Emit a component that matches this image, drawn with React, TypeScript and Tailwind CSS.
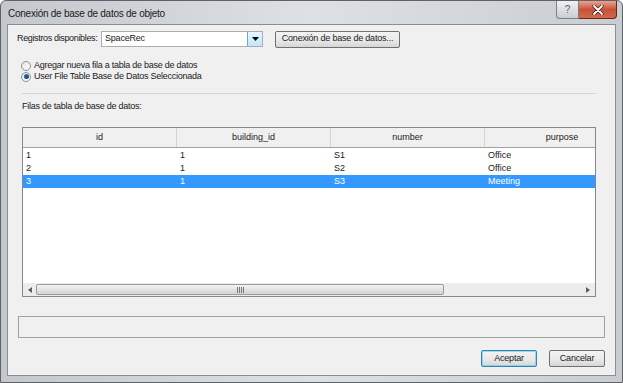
import React from "react";

const font = { fontFamily: '"Liberation Sans", Arial, sans-serif' };

type Row = { id: string; building: string; number: string; purpose: string };

const rows: Row[] = [
  { id: "1", building: "1", number: "S1", purpose: "Office" },
  { id: "2", building: "1", number: "S2", purpose: "Office" },
  { id: "3", building: "1", number: "S3", purpose: "Meeting" },
];

const columns = ["id", "building_id", "number", "purpose"];

const Radio: React.FC<{ checked?: boolean; label: string }> = ({ checked, label }) => (
  <label className="flex items-center gap-[3px] h-[11px]">
    <span className="w-[10px] h-[10px] rounded-full border border-[#8f8f8f] bg-gradient-to-br from-[#e4e4e4] to-[#ffffff] flex items-center justify-center">
      {checked && <span className="w-[5px] h-[5px] rounded-full bg-gradient-to-br from-[#2f6fb0] to-[#1b3f70]" />}
    </span>
    <span className="text-[9px] text-[#1a1a1a] tracking-[-0.25px]">{label}</span>
  </label>
);

const WinButton: React.FC<{ label: string; width: string; focused?: boolean }> = ({ label, width, focused }) => (
  <button
    type="button"
    className={`${width} h-[17px] rounded-[2px] border ${focused ? "border-[#3c7fb1] ring-1 ring-inset ring-[#48d4f8]/60" : "border-[#707070]"} bg-gradient-to-b from-[#f2f2f2] via-[#ebebeb] to-[#d6d6d6] text-[9px] text-[#1a1a1a] flex items-center justify-center tracking-[-0.2px]`}
  >
    {label}
  </button>
);

export default function App() {
  return (
    <div className="w-[623px] h-[383px] bg-white" style={font}>
      <div className="w-[623px] h-[383px] rounded-t-[6px] border border-[#5f6368] bg-gradient-to-r from-[#c4c8ce] via-[#dde0e4] to-[#c9cdd2] flex flex-col">
        {/* title bar */}
        <div className="h-[23px] flex items-start justify-between">
          <span className="text-[10px] text-[#1a1a1a] pl-[7px] pt-[5px] tracking-[-0.25px]">
            Conexión de base de datos de objeto
          </span>
          <div className="flex mr-[5px]">
            <div className="w-[23px] h-[18px] rounded-bl-[4px] border border-t-0 border-[#7a7f86] bg-gradient-to-b from-[#eef0f3] to-[#c9ced5] flex items-center justify-center text-[10px] text-[#5a6270]">
              ?
            </div>
            <div className="w-[38px] h-[18px] rounded-br-[4px] border border-l-0 border-t-0 border-[#6b2418] bg-gradient-to-b from-[#e8a493] via-[#c8513a] to-[#d1694f] flex items-center justify-center">
              <svg width="12" height="10" viewBox="0 0 12 10">
                <path d="M2 1 L10 9 M10 1 L2 9" stroke="#3a1a14" strokeWidth="3.2" strokeLinecap="round" />
                <path d="M2 1 L10 9 M10 1 L2 9" stroke="#ffffff" strokeWidth="1.8" strokeLinecap="round" />
              </svg>
            </div>
          </div>
        </div>

        {/* client area */}
        <div className="mx-[6px] mb-[6px] flex-1 border border-[#8a8e94] bg-[#f0f0f0] flex flex-col px-[9px] text-[#1a1a1a]">
          <div className="flex items-center mt-[5px] h-[18px]">
            <span className="text-[9px] w-[84px] tracking-[-0.35px]">Registros disponibles:</span>
            <div className="w-[162px] h-[16px] border border-[#abadb3] bg-white flex items-center">
              <span className="flex-1 text-[9px] pl-[3px] tracking-[-0.2px]">SpaceRec</span>
              <div className="w-[15px] h-[14px] border-l border-[#7da2ce] bg-gradient-to-b from-[#eaf6fd] to-[#bee6fd] flex items-center justify-center">
                <svg width="7" height="4" viewBox="0 0 7 4">
                  <path d="M0 0 H7 L3.5 4 Z" fill="#000" />
                </svg>
              </div>
            </div>
            <div className="ml-[12px]">
              <WinButton label="Conexión de base de datos..." width="w-[125px]" />
            </div>
          </div>

          <div className="flex flex-col mt-[12px] ml-[4px] gap-0">
            <Radio label="Agregar nueva fila a tabla de base de datos" />
            <Radio checked label="User File Table Base de Datos Seleccionada" />
          </div>

          <div className="mt-[11px] ml-[5px] mr-[10px] h-px bg-[#d5d5d5]" />

          <span className="text-[9px] ml-[5px] mt-[7px] tracking-[-0.25px] leading-[11px]">
            Filas de tabla de base de datos:
          </span>

          {/* table */}
          <div className="ml-[5px] mr-[10px] mt-[15px] h-[170px] border border-[#828790] bg-white flex flex-col overflow-hidden">
            <div className="flex h-[20px] border-b border-[#a0a0a0] bg-[#f0f0f0] shrink-0 overflow-hidden">
              {columns.map((c, i) => (
                <div
                  key={c}
                  className={`w-[154px] shrink-0 flex items-center justify-center text-[9px] ${i < 3 ? "border-r border-[#d5d5d5]" : ""}`}
                >
                  {c}
                </div>
              ))}
            </div>
            <div className="flex-1 flex flex-col pt-[1px]">
              {rows.map((r, i) => (
                <div
                  key={r.id}
                  className={`flex h-[13px] items-center text-[9px] ${i === 2 ? "bg-[#3399ff] text-white" : ""}`}
                >
                  <span className="w-[154px] shrink-0 pl-[3px]">{r.id}</span>
                  <span className="w-[154px] shrink-0 pl-[3px]">{r.building}</span>
                  <span className="w-[154px] shrink-0 pl-[3px]">{r.number}</span>
                  <span className="w-[154px] shrink-0 pl-[3px]">{r.purpose}</span>
                </div>
              ))}
            </div>
            {/* horizontal scrollbar */}
            <div className="h-[13px] bg-[#ececec] flex items-center shrink-0">
              <div className="w-[13px] flex items-center justify-center">
                <svg width="4" height="6" viewBox="0 0 4 6">
                  <path d="M4 0 V6 L0 3 Z" fill="#606060" />
                </svg>
              </div>
              <div className="w-[408px] h-[11px] rounded-[2px] border border-[#9b9b9b] bg-gradient-to-b from-[#f3f3f3] to-[#d4d4d4] flex items-center justify-center">
                <div className="flex gap-[1px]">
                  <span className="w-[1px] h-[6px] bg-[#777]" />
                  <span className="w-[1px] h-[6px] bg-[#777]" />
                  <span className="w-[1px] h-[6px] bg-[#777]" />
                  <span className="w-[1px] h-[6px] bg-[#777]" />
                </div>
              </div>
              <div className="flex-1" />
              <div className="w-[14px] flex items-center justify-center">
                <svg width="4" height="6" viewBox="0 0 4 6">
                  <path d="M0 0 V6 L4 3 Z" fill="#606060" />
                </svg>
              </div>
            </div>
          </div>

          {/* status box */}
          <div className="mt-[19px] ml-[1px] mr-[1px] h-[22px] border border-[#a0a0a0] bg-[#f0f0f0]" />

          <div className="flex justify-end gap-[12px] mt-[12px] mr-[1px]">
            <WinButton label="Aceptar" width="w-[56px]" focused />
            <WinButton label="Cancelar" width="w-[56px]" />
          </div>
        </div>
      </div>
    </div>
  );
}
